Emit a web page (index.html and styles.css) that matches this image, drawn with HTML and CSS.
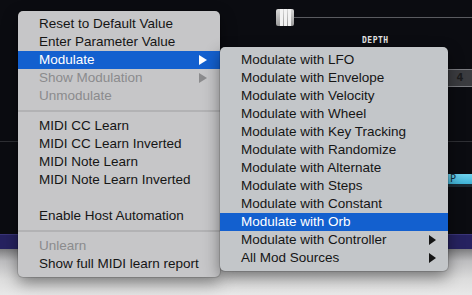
FILE: index.html
```html
<!DOCTYPE html>
<html lang="en">
<head>
  <meta charset="UTF-8">
  <title>Parameter menu</title>
  <link rel="stylesheet" href="styles.css">
</head>
<body>

<div class="stage">
  <div class="plugin">
    <div class="slider-row">
      <div class="handle"><i></i><i></i><i></i></div>
      <div class="track"></div>
    </div>
    <div class="label">DEPTH</div>
    <div class="num-row"><span class="num">4</span></div>
    <div class="rule"></div>
    <div class="p-row"><span class="pbtn">P</span></div>
    <div class="band"></div>
  </div>
  <div class="floor"></div>

  <ul class="menu main-menu">
    <li>Reset to Default Value</li>
    <li>Enter Parameter Value</li>
    <li class="active has-sub">Modulate</li>
    <li class="disabled has-sub">Show Modulation</li>
    <li class="disabled">Unmodulate</li>
    <li class="sep"></li>
    <li>MIDI CC Learn</li>
    <li>MIDI CC Learn Inverted</li>
    <li>MIDI Note Learn</li>
    <li>MIDI Note Learn Inverted</li>
    <li class="blank"></li>
    <li>Enable Host Automation</li>
    <li class="sep"></li>
    <li class="disabled">Unlearn</li>
    <li>Show full MIDI learn report</li>
  </ul>

  <ul class="menu sub-menu">
    <li>Modulate with LFO</li>
    <li>Modulate with Envelope</li>
    <li>Modulate with Velocity</li>
    <li>Modulate with Wheel</li>
    <li>Modulate with Key Tracking</li>
    <li>Modulate with Randomize</li>
    <li>Modulate with Alternate</li>
    <li>Modulate with Steps</li>
    <li>Modulate with Constant</li>
    <li class="active">Modulate with Orb</li>
    <li class="has-sub">Modulate with Controller</li>
    <li class="has-sub">All Mod Sources</li>
  </ul>
</div>

</body>
</html>
```

FILE: styles.css
```css
html, body { margin: 0; padding: 0; }
body { width: 472px; height: 295px; overflow: hidden; background: #e6e6e6; }

.stage { position: relative; width: 472px; height: 295px; }

/* plugin window behind the menus */
.plugin {
  height: 249px;
  background: #0b0c11;
  display: flex;
  flex-direction: column;
}
.slider-row {
  margin-top: 9px;
  padding-left: 276px;
  height: 17px;
  display: flex;
  align-items: center;
}
.handle {
  width: 18px;
  height: 17px;
  display: flex;
  justify-content: center;
  gap: 1px;
  background: linear-gradient(#d8d8d8, #9a9a9a);
  border-radius: 2px;
}
.handle i { width: 3px; background: #f2f2f2; }
.track { flex: 1; height: 1px; background: #5a5b60; }
.label {
  margin-top: 10px;
  padding-left: 362px;
  font: bold 8px/9px "DejaVu Sans Mono", monospace;
  color: #e4e4e4;
  letter-spacing: 0.5px;
}
.num-row { margin-top: 24px; display: flex; justify-content: flex-end; }
.num {
  width: 24px;
  height: 16px;
  background: #3b3c40;
  border-top: 1px solid #7a7b80;
  border-bottom: 1px solid #7a7b80;
  font: bold 10px/16px "DejaVu Sans", sans-serif;
  color: #1c1c1e;
  text-align: center;
}
.rule { margin-top: 54px; height: 1px; background: #2e2f34; }
.p-row { margin-top: 32px; display: flex; justify-content: flex-end; }
.pbtn {
  width: 22px;
  height: 10px;
  padding-left: 2px;
  background: linear-gradient(#6fd3ee, #3fb2d6);
  border-bottom: 3px solid #1b2a33;
  font: 10px/10px "DejaVu Sans Mono", monospace;
  color: #10303c;
}
.band {
  margin-top: auto;
  height: 15px;
  background: #262260;
  border-top: 1px solid #3a3578;
  box-sizing: border-box;
}
.floor {
  height: 46px;
  background: linear-gradient(#7e7e80, #bdbdbf 12px, #dcdcdc 30px, #e8e8e8);
}

/* menus */
.menu {
  position: absolute;
  margin: 0;
  padding: 4px 0;
  list-style: none;
  border-radius: 5px;
  box-shadow: 0 0 0 1px rgba(0, 0, 0, 0.12), 0 6px 16px rgba(0, 0, 0, 0.45);
  font: 13.5px/18px "Liberation Sans", Arial, sans-serif;
  color: #151515;
}
.main-menu { left: 18px; top: 11px; width: 202px; background: #c6c6c8; }
.sub-menu { left: 220px; top: 47px; width: 228px; background: #c3c6c9; }

.menu li {
  position: relative;
  height: 18px;
  padding-left: 21px;
  white-space: nowrap;
}
.menu li.active { background: #1360cf; color: #fff; }
.menu li.disabled { color: #8b8b8d; }
.menu li.blank { height: 18px; }
.menu li.sep { height: 12px; padding: 0; }
.menu li.sep::after {
  content: "";
  position: absolute;
  left: 0;
  right: 0;
  top: 5px;
  height: 2px;
  background: #b2b2b4;
}
.menu li.has-sub::after {
  content: "";
  position: absolute;
  right: 13px;
  top: 4px;
  border-left: 8px solid currentColor;
  border-top: 5px solid transparent;
  border-bottom: 5px solid transparent;
}
.sub-menu li.has-sub::after { right: 12px; border-left-width: 7px; }
```
